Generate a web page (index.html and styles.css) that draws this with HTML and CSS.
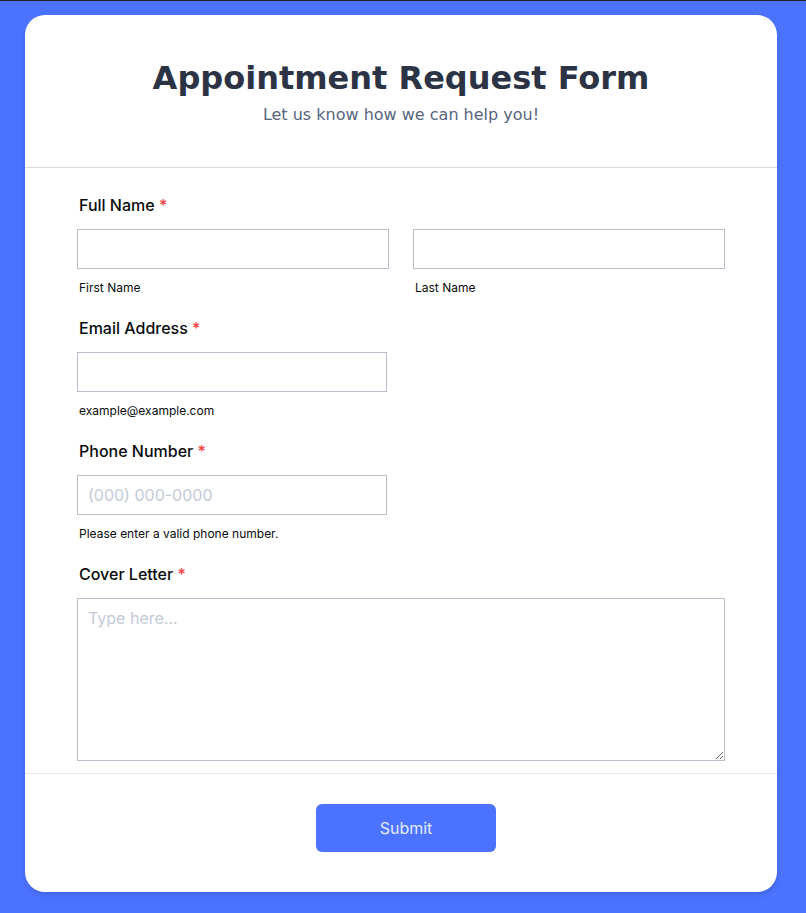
FILE: index.html
```html
<!DOCTYPE html>
<html lang="en">
<head>
<meta charset="utf-8">
<title>Appointment Request Form</title>
<link rel="stylesheet" href="styles.css">
</head>
<body>
<main class="card">
  <header class="card-header">
    <h1 class="title">Appointment Request Form</h1>
    <p class="subtitle">Let us know how we can help you!</p>
  </header>
  <form class="form">
    <div class="field">
      <label class="label">Full Name <span class="req">*</span></label>
      <div class="name-row">
        <div class="sub-field">
          <input class="input" type="text">
          <span class="hint">First Name</span>
        </div>
        <div class="sub-field">
          <input class="input" type="text">
          <span class="hint">Last Name</span>
        </div>
      </div>
    </div>
    <div class="field">
      <label class="label">Email Address <span class="req">*</span></label>
      <div class="sub-field narrow">
        <input class="input" type="email">
        <span class="hint">example@example.com</span>
      </div>
    </div>
    <div class="field">
      <label class="label">Phone Number <span class="req">*</span></label>
      <div class="sub-field narrow">
        <input class="input" type="tel" placeholder="(000) 000-0000">
        <span class="hint">Please enter a valid phone number.</span>
      </div>
    </div>
    <div class="field">
      <label class="label">Cover Letter <span class="req">*</span></label>
      <textarea class="textarea" placeholder="Type here..."></textarea>
    </div>
  </form>
  <footer class="card-footer">
    <button class="submit" type="button">Submit</button>
  </footer>
</main>
</body>
</html>
```

FILE: styles.css
```css
* { box-sizing: border-box; }

html, body {
  margin: 0;
  padding: 0;
}

body {
  background: #4b73ff;
  border-top: 1px solid #232323;
  padding: 14px 25px 21px 25px;
  font-family: "Inter", "Liberation Sans", sans-serif;
}

.card {
  background: #ffffff;
  border-radius: 20px;
  box-shadow: 0 3px 5px rgba(0, 0, 0, 0.12);
  width: 752px;
}

.card-header {
  padding: 44px 20px 43px;
  text-align: center;
  border-bottom: 1px solid #d8dae0;
  font-family: "DejaVu Sans", sans-serif;
}

.title {
  margin: 0;
  font-size: 32px;
  line-height: 38px;
  font-weight: 700;
  color: #2c3345;
}

.subtitle {
  margin: 8px 0 0;
  font-size: 16px;
  line-height: 19px;
  color: #57647e;
}

.form {
  padding: 27px 52px 12px;
  display: flex;
  flex-direction: column;
  gap: 22px;
}

.field {
  display: flex;
  flex-direction: column;
}

.label {
  font-size: 16px;
  line-height: 20px;
  font-weight: 500;
  color: #0a0b0d;
  padding-left: 2px;
  margin-bottom: 14px;
}

.req {
  color: #f23a3c;
}

.name-row {
  display: flex;
  gap: 24px;
}

.sub-field {
  display: flex;
  flex-direction: column;
  width: 312px;
}

.sub-field.narrow {
  width: 310px;
}

.input {
  height: 40px;
  width: 100%;
  border: 1px solid #b8bdc9;
  border-radius: 0;
  padding: 0 10px;
  font-family: "Inter", "Liberation Sans", sans-serif;
  font-size: 16px;
  color: #2c3345;
  background: #ffffff;
  outline: none;
}

.input::placeholder,
.textarea::placeholder {
  color: #c3cad8;
}

.hint {
  margin-top: 11px;
  font-size: 12px;
  line-height: 16px;
  color: #0a0b0d;
  padding-left: 2px;
}

.textarea {
  height: 163px;
  width: 648px;
  border: 1px solid #b8bdc9;
  border-radius: 0;
  padding: 9px 10px;
  font-family: "Inter", "Liberation Sans", sans-serif;
  font-size: 16px;
  line-height: 20px;
  color: #2c3345;
  outline: none;
  resize: both;
}

.card-footer {
  border-top: 1px solid #e6e6ea;
  padding: 30px 0 40px 10px;
  display: flex;
  justify-content: center;
}

.submit {
  width: 180px;
  height: 48px;
  border: none;
  border-radius: 6px;
  background: #4b73ff;
  color: #e3eaff;
  font-family: "Inter", "Liberation Sans", sans-serif;
  font-size: 16px;
  cursor: pointer;
}
```
